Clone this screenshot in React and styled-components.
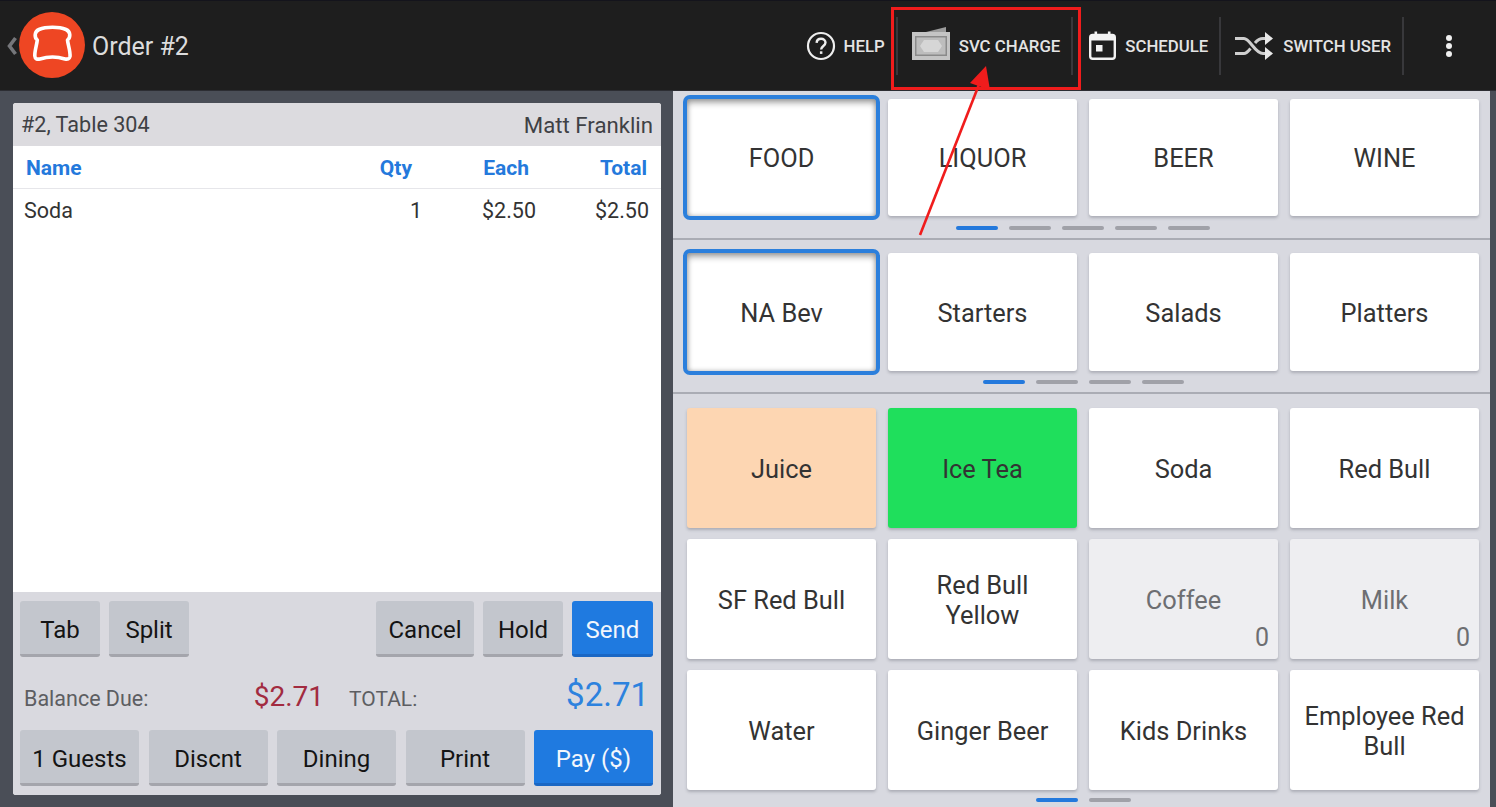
import React from "react";
import styled, { createGlobalStyle } from "styled-components";

const Global = createGlobalStyle`
  html, body { margin: 0; padding: 0; background: #4a4e57; }
  * { box-sizing: border-box; }
`;

const Page = styled.div`
  position: relative;
  width: 1496px;
  height: 807px;
  overflow: hidden;
  display: flex;
  flex-direction: column;
  font-family: Roboto, "Liberation Sans", sans-serif;
  background: #4a4e57;
`;

const Header = styled.header`
  height: 91px;
  flex: none;
  display: flex;
  align-items: center;
  background: #1e1e1e;
  border-top: 1px solid #14141c;
  border-bottom: 1px solid #2c2d33;
`;

const Back = styled.svg`
  width: 12px;
  height: 20px;
  margin-left: 6px;
  flex: none;
`;

const Logo = styled.svg`
  width: 66px;
  height: 66px;
  margin-left: 1px;
  margin-top: -2px;
  flex: none;
`;

const Title = styled.h1`
  margin: 0 0 0 7px;
  padding-top: 2px;
  font-size: 25px;
  font-weight: 400;
  color: #dcdcdc;
  flex: 1;
`;

const Actions = styled.nav`
  display: flex;
  align-items: center;
  height: 58px;
`;

const Action = styled.div`
  display: flex;
  align-items: center;
  height: 100%;
  gap: ${(p) => p.$gap}px;
  padding-left: ${(p) => p.$left}px;
  padding-right: ${(p) => p.$right}px;
  border-right: ${(p) => (p.$sep ? "2px solid #38383b" : "none")};
  color: #e4e4e4;
  font-size: 16.8px;
  font-weight: 500;
  white-space: nowrap;
`;

const Dots = styled.svg`
  width: 10px;
  height: 24px;
  margin-left: 40px;
  margin-right: 42px;
  flex: none;
`;

const Main = styled.main`
  flex: 1;
  min-height: 0;
  display: flex;
  padding-right: 6px;
`;

const LeftColumn = styled.section`
  width: 673px;
  flex: none;
  padding: 12px 12px 12px 13px;
`;

const Ticket = styled.div`
  height: 100%;
  display: flex;
  flex-direction: column;
  border-radius: 3px;
  overflow: hidden;
  background: #fff;
`;

const TicketHead = styled.div`
  height: 43px;
  flex: none;
  display: flex;
  align-items: center;
  justify-content: space-between;
  padding: 0 8px;
  background: #dcdbdf;
  color: #3f4145;
  font-size: 21.6px;
`;

const ServerName = styled.span`
  font-size: 22.2px;
`;

const HeadRow = styled.div`
  height: 43px;
  flex: none;
  display: grid;
  grid-template-columns: 1fr 60px 117px 118px;
  align-items: center;
  padding: 1px 14px 0 13px;
  border-bottom: 1px solid #e6e6ea;
  color: #2479dc;
  font-size: 21px;
  font-weight: 700;
`;

const ItemRow = styled.div`
  height: 43px;
  flex: none;
  display: grid;
  grid-template-columns: 1fr 60px 114px 113px;
  align-items: center;
  padding: 0 12px 0 11px;
  color: #333;
  font-size: 21.5px;
`;

const Cell = styled.span`
  text-align: ${(p) => (p.$right ? "right" : "left")};
`;

const TicketBody = styled.div`
  flex: 1;
  min-height: 0;
  background: #fff;
`;

const TicketFoot = styled.div`
  height: 203px;
  flex: none;
  display: flex;
  flex-direction: column;
  padding: 9px 8px 9px 7px;
  background: #d9d9df;
`;

const ButtonRow = styled.div`
  display: flex;
  gap: ${(p) => p.$gap}px;
`;

const Spacer = styled.div`
  flex: 1;
`;

const Button = styled.button`
  flex: ${(p) => (p.$grow ? "1 1 0" : "none")};
  width: ${(p) => (p.$w ? `${p.$w}px` : "auto")};
  height: 56px;
  padding: 5px 0 0;
  border: 0;
  border-bottom: 3px solid ${(p) => (p.$primary ? "#1a67c4" : "#a4a5ac")};
  border-radius: 3px;
  background: ${(p) => (p.$primary ? "#1f7ae0" : "#c3c6cd")};
  color: ${(p) => (p.$primary ? "#f2f6fc" : "#141414")};
  font-family: inherit;
  font-size: 24px;
`;

const Totals = styled.div`
  flex: 1;
  display: flex;
  align-items: center;
  padding: 6px 4px 0 4px;
`;

const BalanceGroup = styled.div`
  width: 300px;
  flex: none;
  display: flex;
  align-items: center;
  justify-content: space-between;
`;

const TotalLabel = styled.span`
  color: #5d5e62;
  font-size: ${(p) => p.$size}px;
  padding-top: 4px;
  margin-left: ${(p) => p.$left || 0}px;
`;

const Amount = styled.span`
  margin-left: auto;
  margin-top: ${(p) => (p.$lift ? -4 : 0)}px;
  color: ${(p) => p.$color};
  font-size: ${(p) => p.$size}px;
  line-height: 1;
`;

const RightColumn = styled.section`
  flex: 1;
  min-width: 0;
  display: flex;
  flex-direction: column;
  background: #d8d9e0;
`;

const Band = styled.div`
  flex: none;
  padding: ${(p) => p.$top}px 11px ${(p) => p.$bottom}px 14px;
  border-bottom: ${(p) => (p.$last ? "none" : "2px solid #aaacb4")};
`;

const TileGrid = styled.div`
  display: grid;
  grid-template-columns: repeat(4, 189px);
  grid-auto-rows: ${(p) => p.$row}px;
  column-gap: 12px;
  row-gap: 11px;
`;

const Tile = styled.div`
  position: relative;
  display: flex;
  align-items: center;
  justify-content: center;
  padding: 1px 10px 0;
  text-align: center;
  line-height: 30px;
  font-size: 25.4px;
  border-radius: 3px;
  color: ${(p) => (p.$muted ? "#6d6e72" : "#333")};
  background: ${(p) => p.$bg || "#fff"};
  box-shadow: ${(p) =>
    p.$selected
      ? "0 0 0 4px #2b7fdc, inset 0 4px 6px rgba(0,0,0,.32), inset 0 0 5px rgba(0,0,0,.25)"
      : "0 2px 3px rgba(70,72,85,.3)"};
`;

const Count = styled.span`
  position: absolute;
  right: 9px;
  bottom: 7px;
  font-size: 25px;
  line-height: 28px;
  color: #6d6e72;
`;

const Pager = styled.div`
  display: flex;
  justify-content: center;
  gap: 11px;
  margin-top: ${(p) => p.$mt}px;
`;

const Pip = styled.span`
  width: 42px;
  height: 4px;
  border-radius: 2px;
  background: ${(p) => (p.$on ? "#2479dc" : "#a0a1a8")};
`;

const Callout = styled.div`
  position: absolute;
  left: 891px;
  top: 7px;
  width: 190px;
  height: 83px;
  border: 3px solid #f01c1c;
  pointer-events: none;
`;

const Arrow = styled.svg`
  position: absolute;
  left: 910px;
  top: 60px;
  width: 90px;
  height: 185px;
  pointer-events: none;
`;

const cats = ["FOOD", "LIQUOR", "BEER", "WINE"];
const subs = ["NA Bev", "Starters", "Salads", "Platters"];
const items = [
  { t: "Juice", bg: "#fdd6b2" },
  { t: "Ice Tea", bg: "#1fdf5c" },
  { t: "Soda" },
  { t: "Red Bull" },
  { t: "SF Red Bull" },
  { t: "Red Bull Yellow" },
  { t: "Coffee", muted: true, count: 0 },
  { t: "Milk", muted: true, count: 0 },
  { t: "Water" },
  { t: "Ginger Beer" },
  { t: "Kids Drinks" },
  { t: "Employee Red Bull" },
];

const HelpIcon = () => (
  <svg width="30" height="30" viewBox="0 0 30 30" fill="none">
    <circle cx="15" cy="15" r="13" stroke="#eee" strokeWidth="2.2" />
    <path d="M10.6 11.8c.2-2.6 2-4 4.5-4s4.4 1.5 4.4 3.8c0 3.4-4.4 3.4-4.4 7" stroke="#eee" strokeWidth="2.4" />
    <rect x="13.9" y="20.3" width="2.5" height="2.6" fill="#eee" />
  </svg>
);

const CardIcon = () => (
  <svg width="38" height="33" viewBox="0 0 38 33" style={{ marginTop: -4 }}>
    <path d="M14 5 L34 0 L34 5 Z" fill="#9c9c9c" />
    <rect x="0" y="5" width="38" height="28" fill="#c4c4c4" />
    <rect x="3" y="9" width="32" height="20" fill="#8a8a8a" />
    <rect x="4.5" y="10.5" width="29" height="17" fill="#bdbdbd" />
    <path d="M12 13 H26 L30 19 L26 25 H12 L8 19 Z" fill="#d6d6d6" />
  </svg>
);

const CalendarIcon = () => (
  <svg width="27" height="29" viewBox="0 0 27 29" fill="none">
    <rect x="1.2" y="4" width="24.6" height="23.8" rx="2.5" stroke="#f2f2f2" strokeWidth="2.4" />
    <rect x="1.2" y="4" width="24.6" height="5.5" fill="#f2f2f2" />
    <rect x="5.5" y="0.5" width="2.6" height="5" fill="#f2f2f2" />
    <rect x="18.9" y="0.5" width="2.6" height="5" fill="#f2f2f2" />
    <rect x="7" y="14" width="6.5" height="6.5" fill="#f2f2f2" />
  </svg>
);

const ShuffleIcon = () => (
  <svg width="38" height="28" viewBox="0 0 38 28" fill="none">
    <path d="M0 6.5 H9 C15 6.5 20 21.5 28 21.5 H31" stroke="#cfcfcf" strokeWidth="3" />
    <path d="M0 21.5 H9 C11.5 21.5 13.5 19 15.5 16.5 M20 11 C22 8.5 24.5 6.5 28 6.5 H31" stroke="#cfcfcf" strokeWidth="3" />
    <path d="M30 0 L38 6.5 L30 13 Z" fill="#e8e8e8" />
    <path d="M30 15 L38 21.5 L30 28 Z" fill="#e8e8e8" />
  </svg>
);

export default function App() {
  return (
    <Page>
      <Global />
      <Header>
        <Back viewBox="0 0 12 20" fill="none">
          <path d="M9.5 2 L3.5 10 L9.5 18" stroke="#75767a" strokeWidth="3.6" />
        </Back>
        <Logo viewBox="0 0 66 66">
          <circle cx="33" cy="33" r="33" fill="#ee4623" />
          <path
            d="M20 17.5 C27 14.5 40 14.5 47 17.5 C51.5 19.5 52 25 48.5 28 C49 33 51.5 39 51 44.5 C50.5 47 48.5 47.5 46 47 C38 44.5 29 44.5 21 47 C18 47.5 16 47 15.8 44 C15.5 39 17.8 33 18.3 28 C15 25 15.5 19.5 20 17.5 Z"
            fill="none"
            stroke="#fff"
            strokeWidth="3.6"
            strokeLinejoin="round"
          />
        </Logo>
        <Title>Order #2</Title>
        <Actions>
          <Action $gap={8} $left={0} $right={11} $sep>
            <HelpIcon />
            HELP
          </Action>
          <Action $gap={9} $left={14} $right={11} $sep>
            <CardIcon />
            SVC CHARGE
          </Action>
          <Action $gap={9} $left={16} $right={11} $sep>
            <CalendarIcon />
            SCHEDULE
          </Action>
          <Action $gap={10} $left={14} $right={11} $sep>
            <ShuffleIcon />
            SWITCH USER
          </Action>
        </Actions>
        <Dots viewBox="0 0 10 24">
          <circle cx="5" cy="4" r="3" fill="#f0f0f0" />
          <circle cx="5" cy="12" r="3" fill="#f0f0f0" />
          <circle cx="5" cy="20" r="3" fill="#f0f0f0" />
        </Dots>
      </Header>

      <Main>
        <LeftColumn>
          <Ticket>
            <TicketHead>
              <span>#2, Table 304</span>
              <ServerName>Matt Franklin</ServerName>
            </TicketHead>
            <HeadRow>
              <Cell>Name</Cell>
              <Cell $right>Qty</Cell>
              <Cell $right>Each</Cell>
              <Cell $right>Total</Cell>
            </HeadRow>
            <ItemRow>
              <Cell>Soda</Cell>
              <Cell $right>1</Cell>
              <Cell $right>$2.50</Cell>
              <Cell $right>$2.50</Cell>
            </ItemRow>
            <TicketBody />
            <TicketFoot>
              <ButtonRow $gap={9}>
                <Button $w={80}>Tab</Button>
                <Button $w={80}>Split</Button>
                <Spacer />
                <Button $w={98}>Cancel</Button>
                <Button $w={80}>Hold</Button>
                <Button $w={81} $primary>Send</Button>
              </ButtonRow>
              <Totals>
                <BalanceGroup>
                  <TotalLabel $size={21.5}>Balance Due:</TotalLabel>
                  <Amount $color="#a22b40" $size={28}>$2.71</Amount>
                </BalanceGroup>
                <TotalLabel $size={21} $left={25}>TOTAL:</TotalLabel>
                <Amount $color="#2d82de" $size={33} $lift>$2.71</Amount>
              </Totals>
              <ButtonRow $gap={9.5}>
                <Button $grow>1 Guests</Button>
                <Button $grow>Discnt</Button>
                <Button $grow>Dining</Button>
                <Button $grow>Print</Button>
                <Button $grow $primary>Pay ($)</Button>
              </ButtonRow>
            </TicketFoot>
          </Ticket>
        </LeftColumn>

        <RightColumn>
          <Band $top={8} $bottom={8}>
            <TileGrid $row={117}>
              {cats.map((c, i) => (
                <Tile key={c} $selected={i === 0}>{c}</Tile>
              ))}
            </TileGrid>
            <Pager $mt={10}>
              {[0, 1, 2, 3, 4].map((i) => <Pip key={i} $on={i === 0} />)}
            </Pager>
          </Band>
          <Band $top={13} $bottom={8}>
            <TileGrid $row={118}>
              {subs.map((c, i) => (
                <Tile key={c} $selected={i === 0}>{c}</Tile>
              ))}
            </TileGrid>
            <Pager $mt={9}>
              {[0, 1, 2, 3].map((i) => <Pip key={i} $on={i === 0} />)}
            </Pager>
          </Band>
          <Band $top={14} $bottom={0} $last>
            <TileGrid $row={120}>
              {items.map((it) => (
                <Tile key={it.t} $bg={it.muted ? "#eeeef1" : it.bg} $muted={it.muted}>
                  {it.t}
                  {it.count !== undefined && <Count>{it.count}</Count>}
                </Tile>
              ))}
            </TileGrid>
            <Pager $mt={8}>
              {[0, 1].map((i) => <Pip key={i} $on={i === 0} />)}
            </Pager>
          </Band>
        </RightColumn>
      </Main>

      <Callout />
      <Arrow viewBox="0 0 90 185" fill="none">
        <path d="M10 175 L70 22" stroke="#f01c1c" strokeWidth="2.6" />
        <path d="M76 6 L80 30 L60 23 Z" fill="#f01c1c" />
      </Arrow>
    </Page>
  );
}
